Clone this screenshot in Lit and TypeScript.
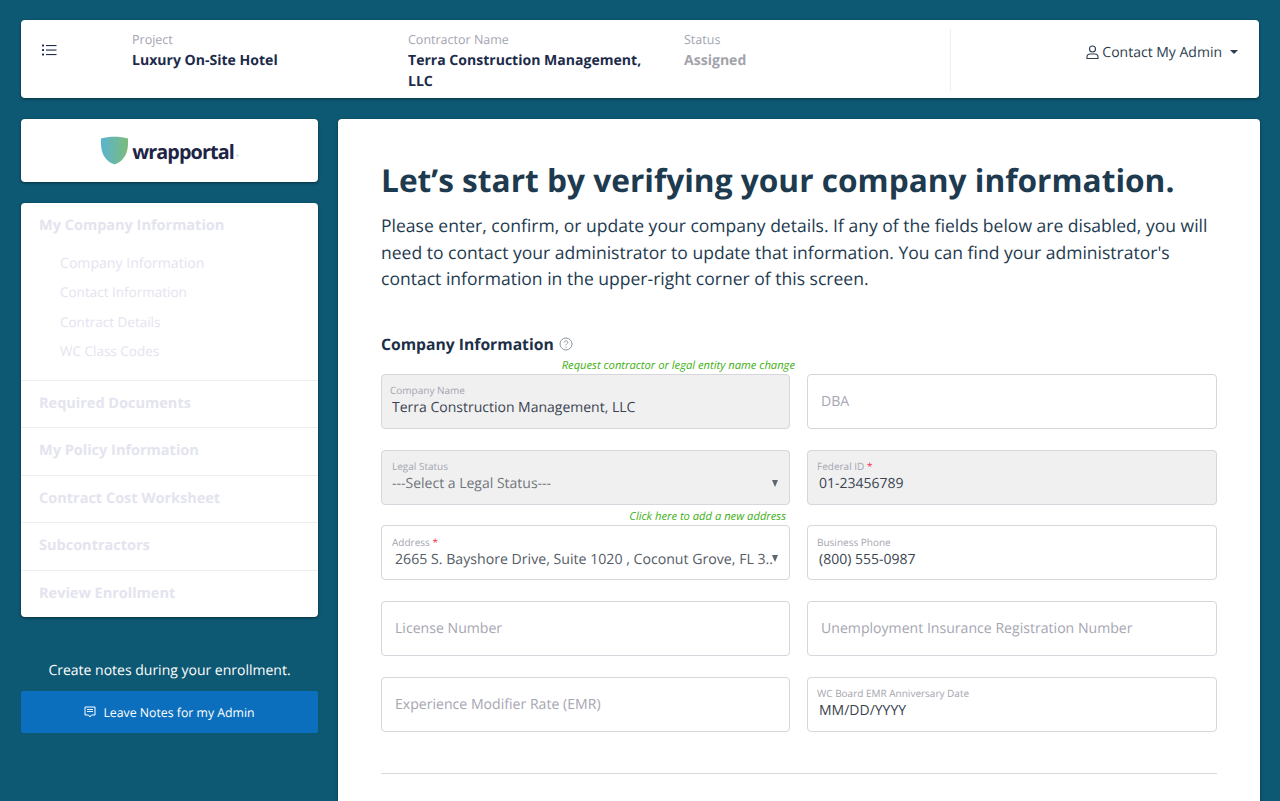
import { LitElement, html, css } from 'lit';
import { customElement } from 'lit/decorators.js';

type Field = {
  label?: string;
  value?: string;
  placeholder?: string;
  required?: boolean;
  disabled?: boolean;
  select?: boolean;
  hint?: string;
  addr?: boolean;
  outdent?: boolean;
};

const FIELDS: Field[] = [
  { label: 'Company Name', value: 'Terra Construction Management, LLC', disabled: true, outdent: true, hint: 'Request contractor or legal entity name change' },
  { placeholder: 'DBA' },
  { label: 'Legal Status', value: '---Select a Legal Status---', disabled: true, select: true },
  { label: 'Federal ID', value: '01-23456789', disabled: true, required: true },
  { label: 'Address', value: '2665 S. Bayshore Drive, Suite 1020 , Coconut Grove, FL 3..', required: true, select: true, addr: true, hint: 'Click here to add a new address' },
  { label: 'Business Phone', value: '(800) 555-0987' },
  { placeholder: 'License Number' },
  { placeholder: 'Unemployment Insurance Registration Number' },
  { placeholder: 'Experience Modifier Rate (EMR)' },
  { label: 'WC Board EMR Anniversary Date', value: 'MM/DD/YYYY' },
];

const NAV = ['Required Documents', 'My Policy Information', 'Contract Cost Worksheet', 'Subcontractors', 'Review Enrollment'];
const SUBNAV = ['Company Information', 'Contact Information', 'Contract Details', 'WC Class Codes'];

@customElement('app-root')
export class AppRoot extends LitElement {
  static styles = css`
    :host {
      display: block;
      height: 801px;
      overflow: hidden;
      background: #0d5873;
      font-family: 'Open Sans', sans-serif;
      color: #1f3547;
      text-rendering: geometricPrecision;
    }

    .page {
      display: flex;
      flex-direction: column;
      gap: 21px;
      padding: 20px 21px 0;
    }

    .card {
      background: #fff;
      border-radius: 4px;
      box-shadow: 0 1px 3px rgba(0, 0, 0, 0.45);
    }

    /* header */
    .topbar {
      height: 78px;
      display: flex;
      padding: 9px 21px 9px 21px;
      box-sizing: border-box;
    }
    .menu {
      width: 90px;
      padding-top: 15px;
      box-sizing: border-box;
      flex: none;
    }
    .menu svg {
      display: block;
    }
    .col {
      width: 276px;
      flex: none;
      padding-right: 36px;
      box-sizing: border-box;
    }
    .col.status {
      width: 267px;
      border-right: 1px solid #eeeeee;
      height: 62px;
    }
    .col small {
      display: block;
      font-size: 12.5px;
      line-height: 20px;
      padding-top: 1px;
      color: #a5a5b3;
    }
    .col b {
      display: block;
      font-size: 14.05px;
      line-height: 21px;
      font-weight: 700;
      color: #1c2b4a;
    }
    .col.status b {
      color: #a3a3ab;
    }
    .contact {
      flex: 1;
      display: flex;
      justify-content: flex-end;
      align-items: center;
      gap: 3px;
      height: 46px;
      font-size: 14px;
      color: #2c3e50;
    }
    .caret {
      width: 0;
      height: 0;
      margin-left: 5px;
      border: 4px solid transparent;
      border-top-color: #2c3e50;
      border-bottom: 0;
    }

    /* columns */
    .body {
      display: flex;
      gap: 20px;
      align-items: flex-start;
    }
    .side {
      width: 297px;
      flex: none;
      display: flex;
      flex-direction: column;
    }
    .logo {
      height: 63px;
      display: flex;
      align-items: center;
      justify-content: center;
      gap: 3px;
      margin-bottom: 21px;
    }
    .logo span {
      font-size: 19.8px;
      font-weight: 700;
      color: #1e2446;
      letter-spacing: -0.9px;
      margin-top: 1px;
    }
    .logo i {
      width: 3px;
      height: 3px;
      border-radius: 50%;
      background: #d5ebe6;
      margin: 10px 0 0 -1px;
    }
    .nav {
      height: 414px;
      color: #e4e4ef;
    }
    .nav-first {
      padding: 12px 18px 14px;
      border-bottom: 1px solid #eeeeee;
      height: 178px;
      box-sizing: border-box;
    }
    .nav h4 {
      margin: 0;
      font-size: 14.5px;
      line-height: 22px;
      font-weight: 700;
    }
    .sub {
      padding: 12px 0 0 21px;
    }
    .sub div {
      font-size: 13.5px;
      line-height: 29.4px;
    }
    .sub div:first-child {
      font-size: 14.1px;
    }
    .nav-item {
      height: 47.4px;
      box-sizing: border-box;
      padding-top: 12px;
      padding-left: 18px;
      border-bottom: 1px solid #eeeeee;
    }
    .nav-item:last-child {
      border-bottom: 0;
    }
    .notes-text {
      margin: 44px 0 0;
      text-align: center;
      font-size: 14px;
      line-height: 20px;
      font-weight: 500;
      color: #fff;
    }
    .notes-btn {
      margin-top: 10px;
      height: 42px;
      display: flex;
      align-items: center;
      justify-content: center;
      gap: 7px;
      background: #0c6fbd;
      border-radius: 2px;
      color: #fff;
      font-size: 12.3px;
      font-weight: 500;
    }

    /* main */
    .main {
      flex: 1;
      height: 760px;
      padding: 41px 43px 0;
      box-sizing: border-box;
    }
    h1 {
      margin: 0;
      font-size: 31.65px;
      line-height: 42px;
      font-weight: 700;
      color: #1e3a4f;
    }
    .intro {
      margin: 11px 0 0;
      font-size: 17.55px;
      line-height: 26.5px;
      color: #1e3a4f;
    }
    .section {
      display: flex;
      align-items: center;
      gap: 5px;
      margin: 39px 0 0;
      font-size: 15.7px;
      line-height: 24px;
      font-weight: 700;
      color: #1c2f47;
    }
    .grid {
      display: grid;
      grid-template-columns: 409px 410px;
      column-gap: 17px;
      margin-top: -2.3px;
    }
    .cell {
      display: flex;
      flex-direction: column;
      justify-content: flex-end;
      height: 75.7px;
    }
    .hint {
      height: 20px;
      line-height: 24px;
      text-align: right;
      font-size: 11.2px;
      font-style: italic;
      color: #3eb012;
      white-space: nowrap;
    }
    .hint.over {
      margin-right: -5px;
    }
    .hint.addr {
      margin-right: 4px;
    }
    .field {
      position: relative;
      height: 55px;
      box-sizing: border-box;
      border: 1px solid #d6d6dc;
      border-radius: 4px;
      padding: 1px 9px 0;
      display: flex;
      flex-direction: column;
      justify-content: center;
      background: #fff;
    }
    .field.disabled {
      background: #f0f0f0;
    }
    .field label {
      font-size: 10px;
      line-height: 11px;
      margin-bottom: 2px;
      color: #a5a5b0;
    }
    .field.outdent label {
      margin-left: -2px;
    }
    .field label em {
      font-style: normal;
      color: #f0334a;
    }
    .value {
      font-size: 14px;
      line-height: 20px;
      color: #3a4450;
      white-space: nowrap;
      padding-left: 2px;
    }
    .field.select .value {
      color: #70757c;
    }
    .placeholder {
      font-size: 14.1px;
      color: #a6a6b2;
      padding-left: 4px;
    }
    .cell:nth-child(odd) .field {
      padding: 1px 10px 0;
    }
    .cell:nth-child(odd) .value {
      padding-left: 0;
    }
    .cell:nth-child(odd) .placeholder {
      padding-left: 3px;
    }
    .cell:nth-child(odd) .field.addr .value {
      color: #555c66;
      font-size: 14.15px;
      padding-left: 3px;
    }
    .arrow {
      position: absolute;
      right: 11px;
      top: 29px;
      width: 0;
      height: 0;
      border-left: 3.5px solid transparent;
      border-right: 3.5px solid transparent;
      border-top: 7px solid #5f666e;
    }
    hr {
      margin: 41px 0 0;
      border: 0;
      height: 1px;
      background: #d7dcd8;
    }
  `;

  private _renderField(f: Field) {
    const cls = ['field', f.disabled ? 'disabled' : '', f.select ? 'select' : '', f.addr ? 'addr' : '', f.outdent ? 'outdent' : ''].join(' ');
    return html`
      <div class="cell">
        ${f.hint
          ? html`<div class="hint ${f.addr ? 'addr' : 'over'}">${f.hint}</div>`
          : ''}
        <div class=${cls}>
          ${f.label
            ? html`<label>${f.label}${f.required ? html` <em>*</em>` : ''}</label>
                <div class="value">${f.value}</div>`
            : html`<div class="placeholder">${f.placeholder}</div>`}
          ${f.select ? html`<div class="arrow"></div>` : ''}
        </div>
      </div>
    `;
  }

  render() {
    return html`
      <div class="page">
        <header class="card topbar">
          <div class="menu">
            <svg width="15" height="12" viewBox="0 0 15 12" fill="#1c2b4a">
              <rect x="0" y="0.5" width="2" height="2" rx="0.5"></rect>
              <rect x="0" y="5" width="2" height="2" rx="0.5"></rect>
              <rect x="0" y="9.5" width="2" height="2" rx="0.5"></rect>
              <rect x="4" y="1" width="10.5" height="1.1"></rect>
              <rect x="4" y="5.5" width="10.5" height="1.1"></rect>
              <rect x="4" y="10" width="10.5" height="1.1"></rect>
            </svg>
          </div>
          <div class="col"><small>Project</small><b>Luxury On-Site Hotel</b></div>
          <div class="col"><small>Contractor Name</small><b>Terra Construction Management, LLC</b></div>
          <div class="col status"><small>Status</small><b>Assigned</b></div>
          <div class="contact">
            <svg width="13" height="15" viewBox="0 0 13 15" fill="none" stroke="#2c3e50" stroke-width="1.1">
              <circle cx="6.5" cy="4" r="3"></circle>
              <path d="M1 12.2c0-2 1.5-3.2 3-3.2h5c1.500 0 3 1.200 3 3.200v1.300H1z"></path>
            </svg>
            <span>Contact My Admin</span>
            <div class="caret"></div>
          </div>
        </header>

        <div class="body">
          <aside class="side">
            <div class="card logo">
              <svg width="29" height="29" viewBox="0 0 29 29">
                <defs>
                  <linearGradient id="shield" x1="0" x2="1" y1="0" y2="0">
                    <stop offset="0" stop-color="#5ab4d0"></stop>
                    <stop offset="1" stop-color="#7dbb7c"></stop>
                  </linearGradient>
                </defs>
                <path d="M1 2.500C5 1.200 9.500.7 14.500.7S24 1.200 28 2.500c.3 8-.5 13-3 17.500-2.300 4-6 7-10 8.300h-1C10 27 6.300 24 4 20 1.500 15.500.7 10.500 1 2.500z" fill="url(#shield)"></path>
              </svg>
              <span>wrapportal</span><i></i>
            </div>
            <nav class="card nav">
              <div class="nav-first">
                <h4>My Company Information</h4>
                <div class="sub">${SUBNAV.map((s) => html`<div>${s}</div>`)}</div>
              </div>
              ${NAV.map((n) => html`<div class="nav-item"><h4>${n}</h4></div>`)}
            </nav>
            <p class="notes-text">Create notes during your enrollment.</p>
            <div class="notes-btn">
              <svg width="12" height="13" viewBox="0 0 12 13" fill="none" stroke="#fff" stroke-width="1">
                <path d="M1 1h10v8H7.500L6 11 4.500 9H1z"></path>
                <path d="M3 3.500h6M3 5.500h6" stroke-width="0.9"></path>
              </svg>
              <span>Leave Notes for my Admin</span>
            </div>
          </aside>

          <main class="card main">
            <h1>Let’s start by verifying your company information.</h1>
            <p class="intro">
              Please enter, confirm, or update your company details. If any of the fields below are disabled, you will
              need to contact your administrator to update that information. You can find your administrator's
              contact information in the upper-right corner of this screen.
            </p>
            <div class="section">
              <span>Company Information</span>
              <svg width="14" height="14" viewBox="0 0 14 14" fill="none" stroke="#8d939c" stroke-width="1">
                <circle cx="7" cy="7" r="6"></circle>
                <path d="M5.200 5.500c0-1 .8-1.700 1.800-1.700s1.800.7 1.800 1.600c0 1.200-1.800 1.300-1.800 2.800"></path>
                <path d="M7 9.600v1.100"></path>
              </svg>
            </div>
            <div class="grid">${FIELDS.map((f) => this._renderField(f))}</div>
            <hr />
          </main>
        </div>
      </div>
    `;
  }
}
